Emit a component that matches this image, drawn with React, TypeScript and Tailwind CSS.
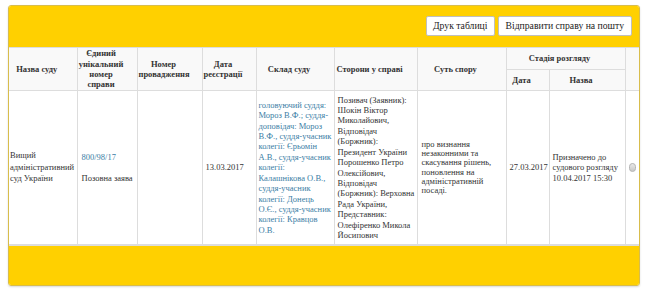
import React from "react";

export default function App() {
  const th = "border border-[#dddddd] bg-[#f9f9f9] font-bold text-center align-middle pl-[1px] pr-[13px] py-0 text-[#333]";
  const td = "border border-[#dddddd] bg-white align-middle px-[3px] py-0 text-left text-[#333]";
  const link = "text-[#3b7ea5]";
  return (
    <div className="w-[650px] h-[300px] bg-white font-['Liberation_Serif','Times_New_Roman',serif]">
      <div className="ml-2 pt-[5px] w-[632px]">
        <div className="rounded-[3px] border border-[#d8bd4c] shadow-[0_1px_2px_rgba(0,0,0,0.15)] overflow-hidden">
          <div className="h-[41px] bg-[#ffd000] flex items-center justify-end gap-[3px] pr-[7px] pb-[1px]">
            <button className="h-[20px] px-[6px] bg-white border border-[#bfbfbf] rounded-[2px] text-[9.7px] text-[#222] leading-none font-['Liberation_Serif',serif]">
              Друк таблиці
            </button>
            <button className="h-[20px] px-[7px] bg-white border border-[#bfbfbf] rounded-[2px] text-[9.7px] text-[#222] leading-none font-['Liberation_Serif',serif]">
              Відправити справу на пошту
            </button>
          </div>
          <table className="table-fixed border-collapse w-[630px] text-[8.5px] leading-[10.4px] font-['Liberation_Serif',serif]">
            <colgroup>
              <col className="w-[68px]" />
              <col className="w-[60px]" />
              <col className="w-[65px]" />
              <col className="w-[54px]" />
              <col className="w-[78px]" />
              <col className="w-[83px]" />
              <col className="w-[89px]" />
              <col className="w-[43px]" />
              <col className="w-[76px]" />
              <col className="w-[14px]" />
            </colgroup>
            <thead>
              <tr className="h-[22px]">
                <th rowSpan={2} className={th + " border-l-0"}>Назва суду</th>
                <th rowSpan={2} className={th}>Єдиний унікальний номер справи</th>
                <th rowSpan={2} className={th + " pl-0 pr-[12px]"}>Номер провадження</th>
                <th rowSpan={2} className={th}>Дата реєстрації</th>
                <th rowSpan={2} className={th}>Склад суду</th>
                <th rowSpan={2} className={th}>Сторони у справі</th>
                <th rowSpan={2} className={th}>Суть спору</th>
                <th colSpan={2} className={th + " px-[1px]"}>Стадія розгляду</th>
                <th rowSpan={2} className={th + " bg-[#f4f4f4] border-r-0 px-0"}></th>
              </tr>
              <tr className="h-[21px]">
                <th className={th}>Дата</th>
                <th className={th}>Назва</th>
              </tr>
            </thead>
            <tbody>
              <tr className="h-[154px]">
                <td className={td + " border-l-0 pl-[1px] pr-0 leading-[11.5px]"}>Вищий адміністративний суд України</td>
                <td className={td + " pl-[4px]"}>
                  <div className={link}>800/98/17</div>
                  <div className="h-[10.4px]" />
                  <div>Позовна заява</div>
                </td>
                <td className={td}></td>
                <td className={td}>13.03.2017</td>
                <td className={td + " pl-[2px] pr-[1px]"}>
                  <div className={link}>
                    головуючий суддя: Мороз В.Ф.; суддя-доповідач: Мороз В.Ф., суддя-учасник колегії: Єрьомін А.В., суддя-учасник колегії: Калашнікова О.В., суддя-учасник колегії: Донець О.Є., суддя-учасник колегії: Кравцов О.В.
                  </div>
                </td>
                <td className={td + " pr-[2px]"}>
                  Позивач (Заявник): Шокін Віктор Миколайович, Відповідач (Боржник): Президент України Порошенко Петро Олексійович, Відповідач (Боржник): Верховна Рада України, Представник: Олефіренко Микола Йосипович
                </td>
                <td className={td + " pl-[4px] leading-[9.1px]"}>
                  про визнання незаконними та скасування рішень, поновлення на адміністративній посаді.
                </td>
                <td className={td + " px-[2px]"}>27.03.2017</td>
                <td className={td}>Призначено до судового розгляду 10.04.2017 15:30</td>
                <td className={td + " border-r-0 px-0"}>
                  <div className="flex justify-center">
                    <span className="block w-[9px] h-[9px] rounded-full border border-[#b5b5b5] bg-gradient-to-b from-[#e8e8e8] to-[#c8c8c8]" />
                  </div>
                </td>
              </tr>
            </tbody>
          </table>
          <div className="h-[40px] bg-[#ffd000] border-t border-[#dddddd]" />
        </div>
      </div>
    </div>
  );
}
